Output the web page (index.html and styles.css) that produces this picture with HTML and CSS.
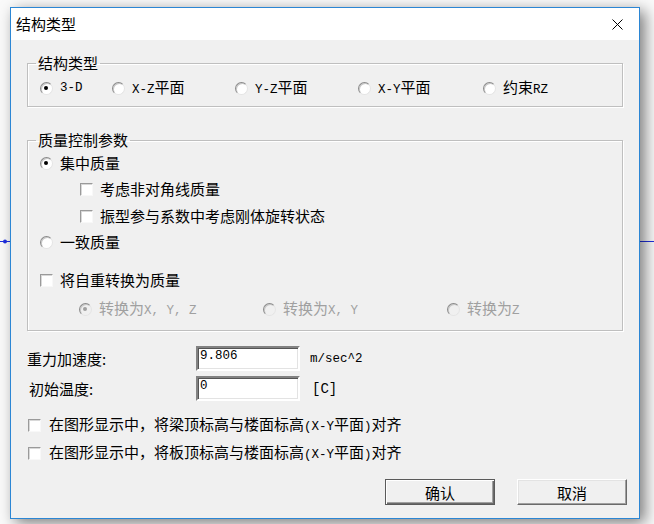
FILE: index.html
```html
<!DOCTYPE html>
<html lang="zh-CN">
<head>
    <meta charset="UTF-8">
    <meta name="viewport" content="width=device-width, initial-scale=1.0">
    <title>结构类型</title>
    <link rel="stylesheet" href="styles.css">
</head>
<body>
    <!-- 背景上的模型轴线 -->
    <svg class="backdrop" width="654" height="524">
        <line x1="0" y1="241.5" x2="654" y2="241.5" stroke="#1f2fe0" stroke-width="1"/>
        <circle cx="5" cy="241.5" r="2" fill="#1f2fe0"/>
    </svg>

    <div class="window">
        <div class="titlebar">
            <span class="title">结构类型</span>
            <span class="close">
                <svg width="11" height="11" viewBox="0 0 11 11">
                    <path d="M0.5 0.5 L10.5 10.5 M10.5 0.5 L0.5 10.5" stroke="#000" stroke-width="1"/>
                </svg>
            </span>
        </div>

        <div class="client">
            <fieldset class="group group-type">
                <legend>结构类型</legend>
                <div class="type-row">
                    <label class="opt"><span class="radio checked"></span><span class="lat">3-D</span></label>
                    <label class="opt"><span class="radio"></span><span><span class="lat">X-Z</span>平面</span></label>
                    <label class="opt"><span class="radio"></span><span><span class="lat">Y-Z</span>平面</span></label>
                    <label class="opt"><span class="radio"></span><span><span class="lat">X-Y</span>平面</span></label>
                    <label class="opt"><span class="radio"></span><span>约束<span class="lat">RZ</span></span></label>
                </div>
            </fieldset>

            <fieldset class="group group-mass">
                <legend>质量控制参数</legend>
                <label class="opt row r-lumped"><span class="radio checked"></span>集中质量</label>
                <label class="opt row sub r-offdiag"><span class="check"></span>考虑非对角线质量</label>
                <label class="opt row sub r-rigid"><span class="check"></span>振型参与系数中考虑刚体旋转状态</label>
                <label class="opt row r-consistent"><span class="radio"></span>一致质量</label>
                <label class="opt row r-selfweight"><span class="check"></span>将自重转换为质量</label>
                <div class="convert-row">
                    <label class="opt disabled"><span class="radio checked"></span><span>转换为<span class="lat">X, Y, Z</span></span></label>
                    <label class="opt disabled"><span class="radio"></span><span>转换为<span class="lat">X, Y</span></span></label>
                    <label class="opt disabled"><span class="radio"></span><span>转换为<span class="lat">Z</span></span></label>
                </div>
            </fieldset>

            <div class="fields">
                <label class="field-label" for="gravity">重力加速度:</label>
                <input class="edit" id="gravity" type="text" value="9.806">
                <span class="lat unit">m/sec^2</span>

                <label class="field-label indent" for="temp">初始温度:</label>
                <input class="edit" id="temp" type="text" value="0">
                <span class="lat unit unit-c">[C]</span>
            </div>

            <label class="opt line first"><span class="check"></span><span>在图形显示中，将梁顶标高与楼面标高<span class="lat">(X-Y</span>平面<span class="lat">)</span>对齐</span></label>
            <label class="opt line"><span class="check"></span><span>在图形显示中，将板顶标高与楼面标高<span class="lat">(X-Y</span>平面<span class="lat">)</span>对齐</span></label>

            <div class="actions">
                <button class="btn default">确认</button>
                <button class="btn">取消</button>
            </div>
        </div>
    </div>
</body>
</html>
```

FILE: styles.css
```css
html, body {
    margin: 0;
    height: 524px;
    overflow: hidden;
}
body {
    position: relative;
    padding: 7px 0 0 10px;
    box-sizing: border-box;
    background-color: #fafafa;
    font-family: "Noto Sans CJK SC", sans-serif;
    font-size: 15px;
    color: #000;
}
.backdrop {
    position: absolute;
    top: 0;
    left: 0;
}
.lat {
    font-family: "Liberation Mono", monospace;
    font-size: 12.5px;
}
.window {
    position: relative;
    width: 630px;
    height: 512px;
    box-sizing: border-box;
    display: flex;
    flex-direction: column;
    border: 1px solid #2b86d4;
    background-color: #f0f0f0;
    box-shadow: 5px 4px 14px rgba(0,0,0,0.5);
}
.titlebar {
    height: 32px;
    display: flex;
    align-items: center;
    justify-content: space-between;
    padding: 0 16px 0 5px;
    background-color: #fff;
}
.title {
    line-height: 20px;
}
.close {
    display: flex;
    margin-top: 1px;
}
.client {
    flex: 1;
    padding: 14px 16px 0 16px;
}

/* 分组框 */
.group {
    margin: 0;
    padding: 0 8px 8px 8px;
    border: 1px solid #bfbfbf;
    box-shadow: inset 1px 1px 0 #fff, 1px 1px 0 #fff;
    min-width: 0;
}
.group legend {
    padding: 0 2px;
    line-height: 18px;
}
.group-type {
    padding-top: 6px;
}
.type-row {
    display: grid;
    grid-template-columns: 72px 123px 123px 125px auto;
    padding-left: 4px;
}
.group-mass {
    margin-top: 24px;
    padding-top: 4px;
    padding-bottom: 11px;
}

.opt {
    display: flex;
    align-items: center;
    gap: 7px;
    height: 20px;
    line-height: 20px;
    white-space: nowrap;
}
.row {
    padding-left: 4px;
}
.row.sub {
    padding-left: 44px;
}
.r-offdiag { margin-top: 6px; }
.r-rigid { margin-top: 7px; }
.r-consistent { margin-top: 6px; }
.r-selfweight { margin-top: 18px; }
.convert-row {
    display: grid;
    grid-template-columns: 184px 184px auto;
    padding-left: 43px;
    margin-top: 9px;
}
.disabled {
    color: #a0a0a0;
}

/* 单选框与复选框 */
.radio {
    position: relative;
    flex: none;
    width: 13px;
    height: 13px;
    box-sizing: border-box;
    border-radius: 50%;
    border: 1px solid #8a8a8a;
    border-right-color: #e4e4e4;
    border-bottom-color: #e4e4e4;
    background-color: #fff;
    box-shadow: inset 1px 1px 0 #c8c8c8;
}
.radio.checked:after {
    content: "";
    position: absolute;
    left: 3px;
    top: 3px;
    width: 4px;
    height: 4px;
    border-radius: 50%;
    background-color: #000;
}
.disabled .radio {
    background-color: #f0f0f0;
}
.disabled .radio.checked:after {
    background-color: #a0a0a0;
}
.check {
    flex: none;
    width: 13px;
    height: 13px;
    box-sizing: border-box;
    border: 1px solid #9a9a9a;
    border-right-color: #f8f8f8;
    border-bottom-color: #f8f8f8;
    background-color: #fff;
    box-shadow: inset 1px 1px 0 #d8d8d8;
}

/* 数值输入 */
.fields {
    display: grid;
    grid-template-columns: 169px 104px auto;
    grid-template-rows: 25px 25px;
    row-gap: 5px;
    align-items: center;
    margin-top: 15px;
}
.indent {
    padding-left: 2px;
}
.edit {
    width: 104px;
    height: 25px;
    box-sizing: border-box;
    margin: 0;
    padding: 0 0 6px 2px;
    border: 2px solid;
    border-color: #828282 #fff #fff #828282;
    box-shadow: inset 1px 1px 0 #555, inset -1px -1px 0 #e3e3e3;
    background-color: #fff;
    font-family: "Liberation Mono", monospace;
    font-size: 12.5px;
    color: #000;
    outline: none;
}
.unit {
    margin-left: 10px;
}
.unit-c {
    margin-left: 12px;
    font-size: 14px;
}

.line {
    padding-left: 1px;
    gap: 8px;
}
.line.first {
    margin-top: 14px;
}
.line + .line {
    margin-top: 8px;
}

/* 按钮 */
.actions {
    display: flex;
    justify-content: flex-end;
    gap: 22px;
    margin: 16px -4px 0 0;
}
.btn {
    width: 110px;
    height: 26px;
    margin: 0;
    padding: 0;
    border: 1px solid;
    border-color: #fff #6a6a6a #6a6a6a #fff;
    box-shadow: inset -1px -1px 0 #a0a0a0, inset 1px 1px 0 #e3e3e3;
    background-color: #f0f0f0;
    font-family: "Noto Sans CJK SC", sans-serif;
    font-size: 15px;
    color: #000;
}
.btn.default {
    border-color: #5a5a5a;
    box-shadow: inset 1px 1px 0 #fff, inset -1px -1px 0 #6a6a6a, inset -2px -2px 0 #a0a0a0;
}
```
